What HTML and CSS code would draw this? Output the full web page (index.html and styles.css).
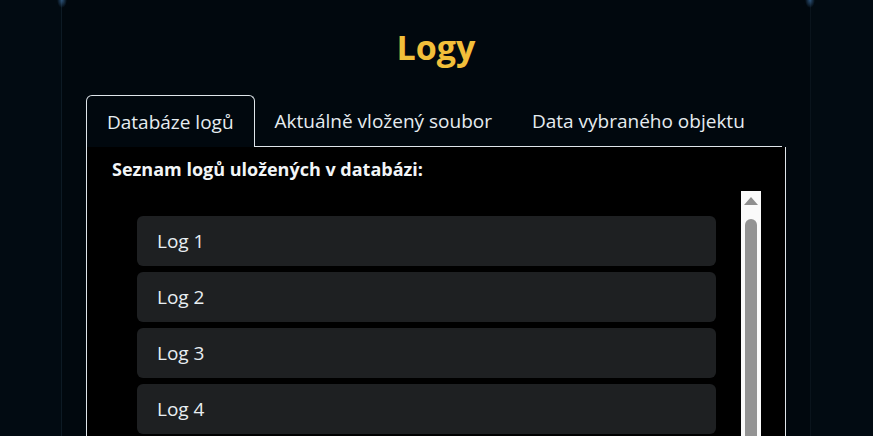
FILE: index.html
```html
<!DOCTYPE html>
<html lang="cs">
<head>
<meta charset="utf-8">
<title>Logy</title>
<link rel="stylesheet" href="styles.css">
</head>
<body>
<div class="page">
  <div class="panel">
    <span class="glow glow-left"></span>
    <span class="glow glow-right"></span>
    <h1 class="title">Logy</h1>
    <div class="tabs">
      <div class="tab active">Databáze logů</div>
      <div class="tab">Aktuálně vložený soubor</div>
      <div class="tab">Data vybraného objektu</div>
      <div class="tab-fill"></div>
    </div>
    <div class="content">
      <h2 class="subtitle">Seznam logů uložených v databázi:</h2>
      <div class="list-wrap">
        <ul class="log-list">
          <li class="log-item">Log 1</li>
          <li class="log-item">Log 2</li>
          <li class="log-item">Log 3</li>
          <li class="log-item">Log 4</li>
        </ul>
        <div class="scrollbar">
          <span class="arrow"></span>
          <span class="thumb"></span>
        </div>
      </div>
    </div>
  </div>
</div>
</body>
</html>
```
FILE: styles.css
```css
* { box-sizing: border-box; }
html, body {
  margin: 0;
  height: 100%;
  background: #020b12;
  overflow: hidden;
}
body {
  font-family: "Open Sans", "Noto Sans", sans-serif;
  color: #e8eef2;
}
.page {
  display: flex;
  justify-content: center;
  height: 100%;
  padding-right: 1px;
}
.panel {
  position: relative;
  width: 750px;
  height: 100%;
  background: #01080e;
  border-left: 1px solid #0d1a24;
  border-right: 1px solid #0a141c;
  padding: 0 24px;
  display: flex;
  flex-direction: column;
}
.glow {
  position: absolute;
  top: 0;
  width: 10px;
  height: 8px;
  background: radial-gradient(ellipse at top, rgba(60,110,160,0.7), rgba(60,110,160,0) 70%);
}
.glow-left { left: -5px; }
.glow-right { right: -5px; }
.title {
  margin: 24px 0 0;
  height: 46px;
  text-align: center;
  font-size: 34px;
  line-height: 46px;
  font-weight: 700;
  color: #f2bf3a;
}
.tabs {
  margin-top: 25px;
  display: flex;
  align-items: flex-end;
  height: 52px;
}
.tab {
  height: 52px;
  padding: 0 20px;
  font-size: 19px;
  line-height: 52px;
  color: #e6ecf0;
  border-bottom: 1px solid #dfe5ea;
  white-space: nowrap;
}
.tab.active {
  border: 1px solid #dfe5ea;
  border-bottom: none;
  border-radius: 6px 6px 0 0;
}
.tab-fill {
  flex: 1;
  margin-right: 4px;
  height: 52px;
  border-bottom: 1px solid #dfe5ea;
}
.content {
  flex: 1;
  width: 700px;
  background: #000;
  border-left: 1px solid #dfe5ea;
  border-right: 1px solid #dfe5ea;
  padding: 10px 0 0 25px;
}
.subtitle {
  margin: 0;
  font-size: 18px;
  line-height: 24px;
  font-weight: 700;
  color: #f2f5f7;
}
.list-wrap {
  display: flex;
  margin-top: 10px;
  height: 400px;
}
.log-list {
  list-style: none;
  margin: 25px 0 0 25px;
  padding: 0;
  width: 579px;
  display: flex;
  flex-direction: column;
  gap: 6px;
}
.log-item {
  height: 50px;
  line-height: 50px;
  padding-left: 20px;
  background: #1e2022;
  border-radius: 6px;
  font-size: 19px;
  color: #e8eef2;
}
.scrollbar {
  margin-left: 25px;
  width: 20px;
  background: #fafafa;
  display: flex;
  flex-direction: column;
  align-items: center;
  padding-top: 6px;
}
.arrow {
  width: 0;
  height: 0;
  border-left: 7px solid transparent;
  border-right: 7px solid transparent;
  border-bottom: 8px solid #8f8f8f;
}
.thumb {
  margin-top: 14px;
  width: 12px;
  flex: 1;
  background: #939393;
  border-radius: 6px 6px 0 0;
}
```
